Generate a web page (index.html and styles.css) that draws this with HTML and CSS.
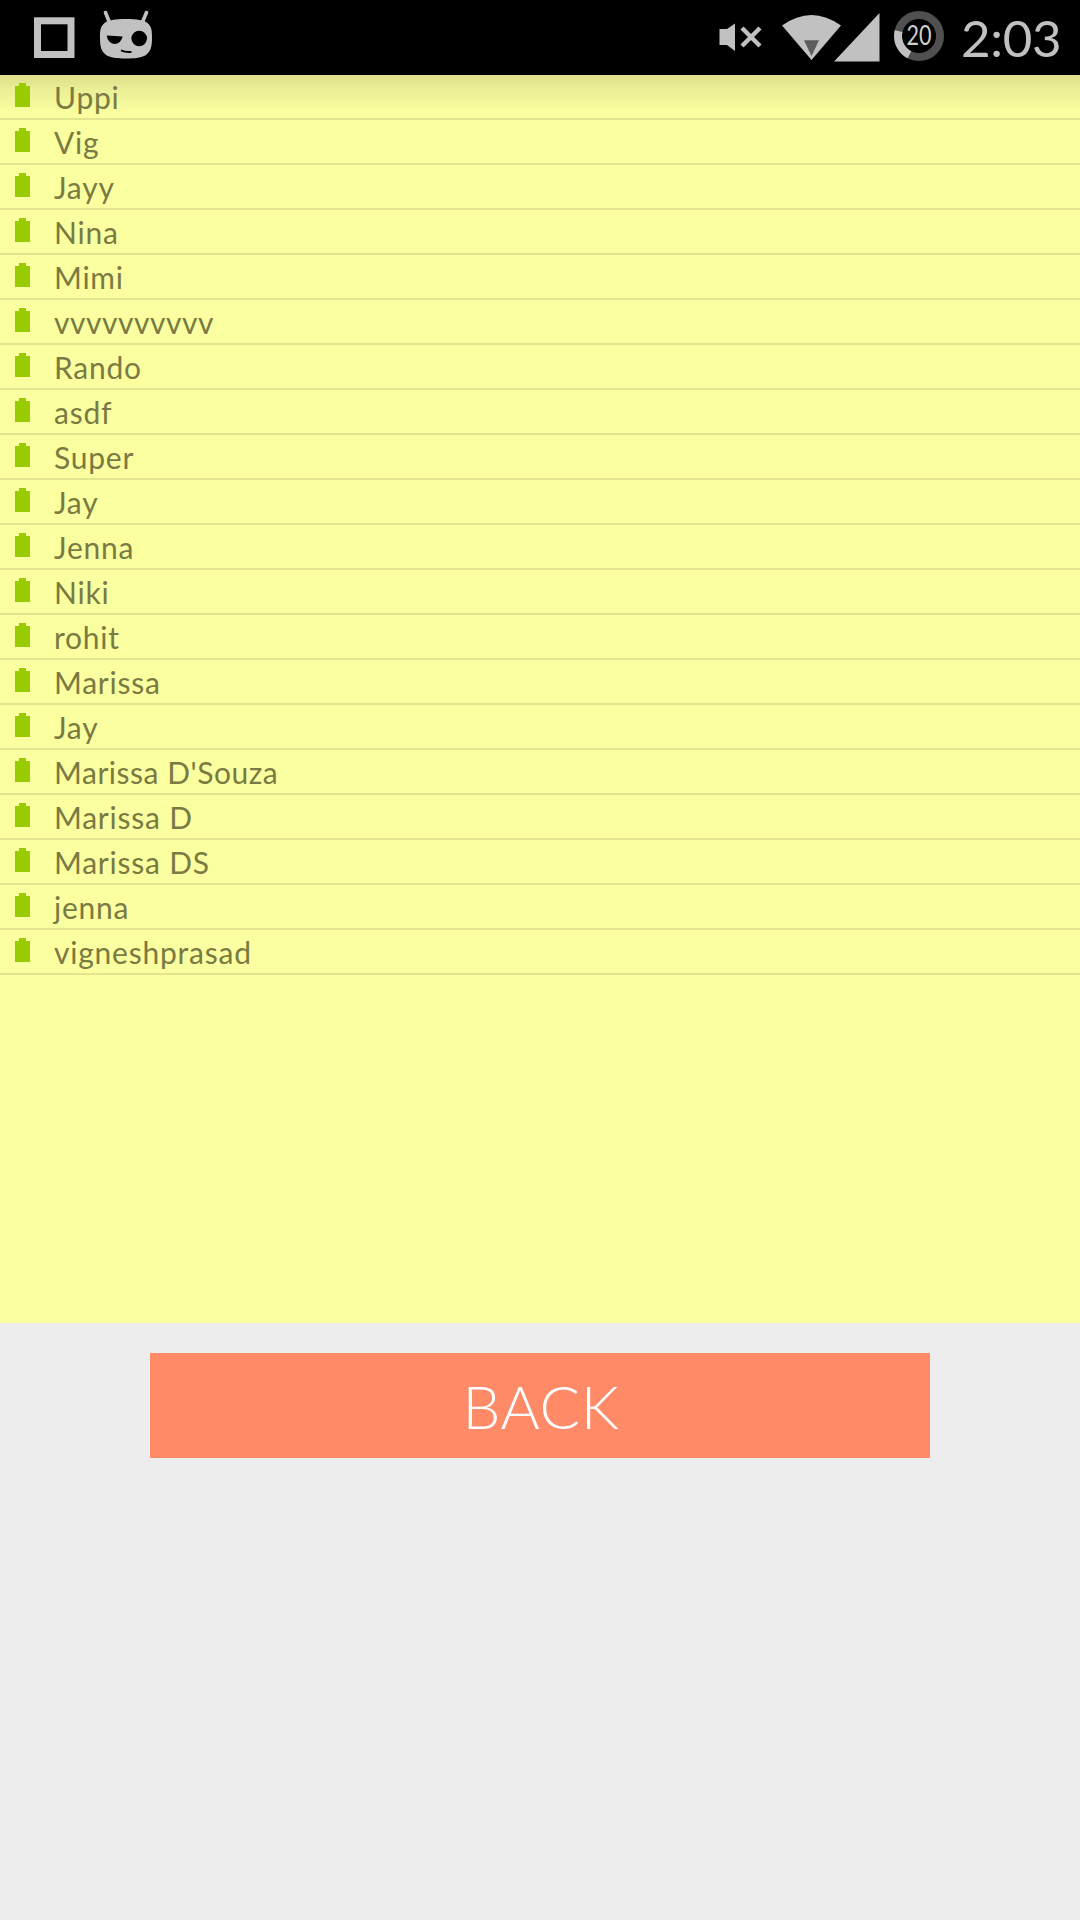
FILE: index.html
```html
<!DOCTYPE html>
<html lang="en">
<head>
<meta charset="utf-8">
<title>Players</title>
<link rel="stylesheet" href="styles.css">
</head>
<body>
<header class="status">
  <svg class="status-left" width="200" height="75" viewBox="0 0 200 75">
    <rect x="37.5" y="20.800" width="33.500" height="33.700" fill="none" stroke="#c1c1c1" stroke-width="7"/>
    <path d="M105.500 12.500L109.300 22M146.500 12.500L142.500 22" stroke="#c1c1c1" stroke-width="3.600" stroke-linecap="round"/>
    <path d="M126 19C137 19 144 20 147.500 23C152 26.500 152 32 152 38C152 46 151 51 146.500 54.500C142 58 135 58.500 126 58.500C117 58.500 110 58 105.500 54.500C101 51 100 46 100 38C100 32 100 26.500 104.500 23C108 20 115 19 126 19Z" fill="#c1c1c1"/>
    <path d="M106.800 35.400L122.600 36.600A8 9 0 0 1 106.800 36Z" fill="#000"/>
    <circle cx="139.200" cy="38.500" r="7.800" fill="#000"/>
    <path d="M121 50.400Q126 52.600 131.500 51.800" fill="none" stroke="#000" stroke-width="1.800"/>
  </svg>
  <svg class="status-right" width="250" height="75" viewBox="700 0 250 75">
    <path d="M719.500 29H727L735 23.500V51L727 45H719.500Z" fill="#c1c1c1"/>
    <path d="M742 28L760 46M760 28L742 46" stroke="#c1c1c1" stroke-width="4.400"/>
    <path d="M782 25.500Q811.500 4.500 841 25.500L811.500 60Z" fill="#c1c1c1"/>
    <path d="M804 40.300H819L811.500 56Z" fill="#5d5d5d"/>
    <path d="M879.500 13V61.500H834Z" fill="#c1c1c1"/>
    <circle cx="919" cy="36" r="21" fill="none" stroke="#505050" stroke-width="8"/>
    <path d="M898.600 31.200A21 21 0 0 0 909.400 54.700" fill="none" stroke="#c1c1c1" stroke-width="8"/>
    <text class="charge" x="919" y="44.800" text-anchor="middle" textLength="25" lengthAdjust="spacingAndGlyphs">20</text>
  </svg>
  <span class="clock">2:03</span>
</header>
<main class="screen">
  <ul class="names">
    <li class="name">Uppi</li>
    <li class="name">Vig</li>
    <li class="name">Jayy</li>
    <li class="name">Nina</li>
    <li class="name">Mimi</li>
    <li class="name name-tight">vvvvvvvvvv</li>
    <li class="name">Rando</li>
    <li class="name">asdf</li>
    <li class="name">Super</li>
    <li class="name">Jay</li>
    <li class="name">Jenna</li>
    <li class="name">Niki</li>
    <li class="name">rohit</li>
    <li class="name">Marissa</li>
    <li class="name">Jay</li>
    <li class="name name-tight">Marissa D'Souza</li>
    <li class="name">Marissa D</li>
    <li class="name">Marissa DS</li>
    <li class="name">jenna</li>
    <li class="name">vigneshprasad</li>
  </ul>
  <button class="back">BACK</button>
</main>
</body>
</html>
```
FILE: styles.css
```css
* { box-sizing: border-box; }

body {
  margin: 0;
  min-height: 1920px;
  background: #ededed;
  font-family: Lato, sans-serif;
}

.status {
  display: flex;
  height: 75px;
  background: #000;
}

.status svg { flex: none; }

.status-right { margin-left: 500px; }

.charge {
  font-size: 26px;
  fill: #d0d0d0;
}

.clock {
  margin-left: 11px;
  font-size: 51px;
  line-height: 76px;
  letter-spacing: -0.3px;
  color: #c1c1c1;
}

.screen {
  display: flex;
  flex-direction: column;
  align-items: center;
  gap: 30px;
}

.names {
  width: 100%;
  height: 1248px;
  margin: 0;
  padding: 0;
  list-style: none;
  background: linear-gradient(#dddf8b, #eaee95 14px, #faff9f 38px);
}

.name {
  display: flex;
  gap: 24px;
  height: 45px;
  padding-left: 15px;
  border-bottom: 2px solid #e1e58f;
  font-size: 30px;
  line-height: 44px;
  letter-spacing: 0.77px;
  color: #7a7a43;
}

.name-tight { letter-spacing: 0.53px; }

/* Battery glyph in front of each name */
.name::before {
  content: "";
  width: 15px;
  height: 24px;
  margin-top: 8px;
  background: #99cc00;
  clip-path: polygon(4px 0, 11px 0, 11px 3px, 100% 3px, 100% 100%, 0 100%, 0 3px, 4px 3px);
}

.back {
  width: 780px;
  height: 105px;
  padding: 0 0 0 2px;
  border: 0;
  background: #ff8a67;
  color: #fff;
  font: 300 60px/1 Lato, sans-serif;
  letter-spacing: 0.6px;
}
```
